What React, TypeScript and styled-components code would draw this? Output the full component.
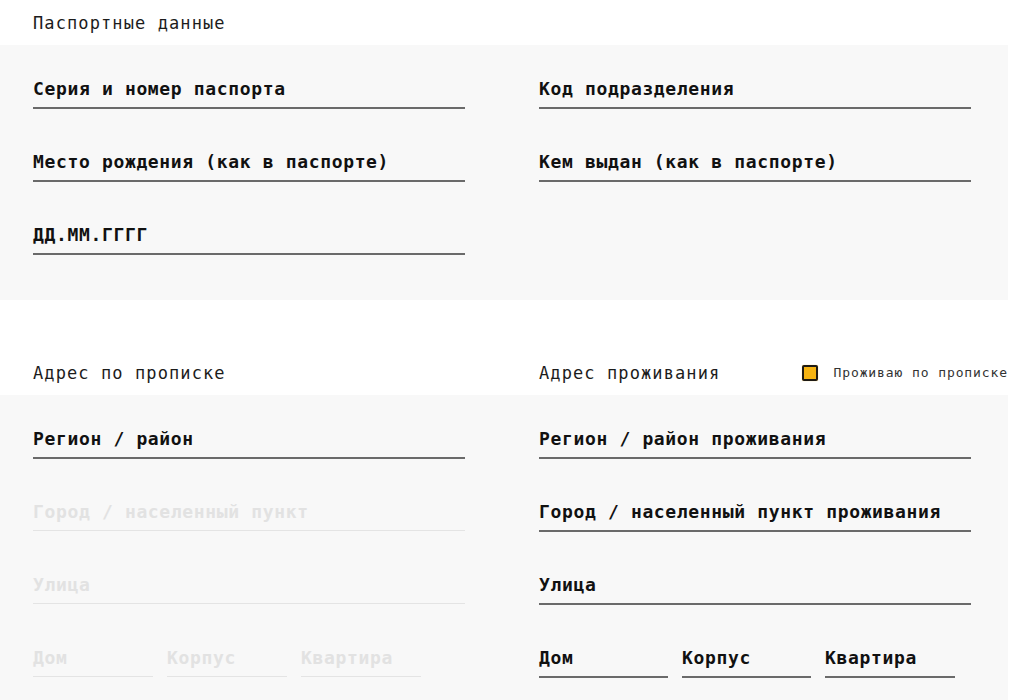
import React from 'react';
import styled, {createGlobalStyle} from 'styled-components';

const GlobalStyle = createGlobalStyle`
    html, body {
        margin: 0;
        padding: 0;
        background: #ffffff;
    }

    body {
        font-family: 'DejaVu Sans Mono', 'Liberation Mono', monospace;
        color: #111111;
    }
`;

const Page = styled.div`
    width: 1008px;
    display: flex;
    flex-direction: column;
`;

const Section = styled.section<{$gapTop?: number}>`
    display: flex;
    flex-direction: column;
    margin-top: ${(p) => p.$gapTop ?? 0}px;
`;

const HeaderRow = styled.div`
    height: 45px;
    display: flex;
    align-items: center;
    padding-left: 33px;
`;

const HeaderLeft = styled.div`
    width: 506px;
    display: flex;
    align-items: center;
`;

const HeaderRight = styled.div`
    flex: 1;
    display: flex;
    align-items: center;
`;

const Title = styled.h2`
    margin: 0;
    font-size: 17px;
    font-weight: 400;
    letter-spacing: 1.1px;
    line-height: 24px;
    color: #1c1c1c;
`;

const CheckLabel = styled.label`
    margin-left: auto;
    display: flex;
    align-items: center;
    gap: 15px;
    font-size: 13px;
    letter-spacing: 0.9px;
    color: #333333;
    cursor: pointer;
`;

const CheckBox = styled.span`
    width: 12px;
    height: 12px;
    border: 2px solid #1e1a14;
    border-radius: 2px;
    background: #f5b312;
    box-shadow: 0 0 1px rgba(245, 179, 18, 0.8);
`;

const Panel = styled.div<{$padBottom?: number}>`
    background: #f8f8f8;
    padding: 32px 0 ${(p) => p.$padBottom ?? 45}px 33px;
    display: grid;
    grid-template-columns: 432px 432px;
    column-gap: 74px;
`;

const Column = styled.div`
    display: flex;
    flex-direction: column;
    gap: 41px;
`;

const Row = styled.div<{$gap?: number}>`
    display: flex;
    gap: ${(p) => p.$gap ?? 14}px;
`;

const Field = styled.div<{$disabled?: boolean; $width?: number}>`
    ${(p) => (p.$width ? `width: ${p.$width}px;` : 'width: 100%;')}
    box-sizing: border-box;
    padding-bottom: 6px;
    border-bottom: ${(p) => (p.$disabled ? '1px solid #e4e4e4' : '2px solid #6a6a6a')};
    margin-bottom: ${(p) => (p.$disabled ? '1px' : '0')};
    font-size: 18px;
    font-weight: 700;
    letter-spacing: 0.65px;
    line-height: 24px;
    color: ${(p) => (p.$disabled ? '#e2e2e2' : '#111111')};
    white-space: nowrap;
`;

export default function App() {
    return (
        <Page>
            <GlobalStyle/>
            <Section>
                <HeaderRow>
                    <Title>Паспортные данные</Title>
                </HeaderRow>
                <Panel>
                    <Column>
                        <Field>Серия и номер паспорта</Field>
                        <Field>Место рождения (как в паспорте)</Field>
                        <Field>ДД.ММ.ГГГГ</Field>
                    </Column>
                    <Column>
                        <Field>Код подразделения</Field>
                        <Field>Кем выдан (как в паспорте)</Field>
                    </Column>
                </Panel>
            </Section>
            <Section $gapTop={50}>
                <HeaderRow>
                    <HeaderLeft>
                        <Title>Адрес по прописке</Title>
                    </HeaderLeft>
                    <HeaderRight>
                        <Title>Адрес проживания</Title>
                        <CheckLabel>
                            <CheckBox/>
                            Проживаю по прописке
                        </CheckLabel>
                    </HeaderRight>
                </HeaderRow>
                <Panel $padBottom={30}>
                    <Column>
                        <Field>Регион / район</Field>
                        <Field $disabled>Город / населенный пункт</Field>
                        <Field $disabled>Улица</Field>
                        <Row>
                            <Field $disabled $width={120}>Дом</Field>
                            <Field $disabled $width={120}>Корпус</Field>
                            <Field $disabled $width={120}>Квартира</Field>
                        </Row>
                    </Column>
                    <Column>
                        <Field>Регион / район проживания</Field>
                        <Field>Город / населенный пункт проживания</Field>
                        <Field>Улица</Field>
                        <Row>
                            <Field $width={129}>Дом</Field>
                            <Field $width={129}>Корпус</Field>
                            <Field $width={130}>Квартира</Field>
                        </Row>
                    </Column>
                </Panel>
            </Section>
        </Page>
    );
}
